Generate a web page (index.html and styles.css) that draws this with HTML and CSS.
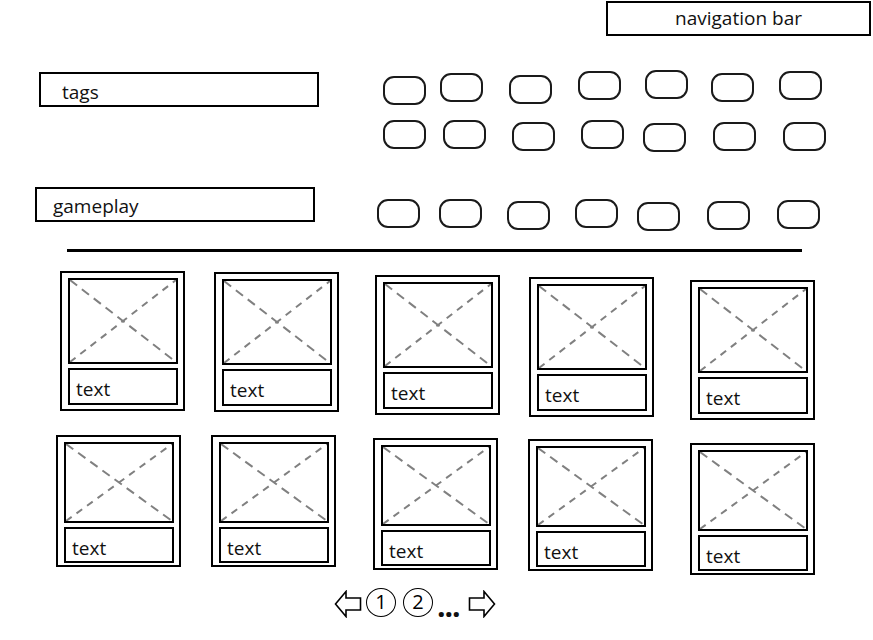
FILE: index.html
```html
<!DOCTYPE html>
<html lang="en">
<head>
  <meta charset="UTF-8">
  <meta name="viewport" content="width=device-width, initial-scale=1.0">
  <title>Games - wireframe</title>
  <link rel="stylesheet" href="styles.css">
</head>
<body>
  <header class="header">
    <div class="nav-box">navigation bar</div>
  </header>

  <section class="filters">
    <div class="filter-row filter-tags">
      <div class="label-box">tags</div>
      <div class="pill-grid">
        <span class="pill"></span><span class="pill"></span><span class="pill"></span><span class="pill"></span><span class="pill"></span><span class="pill"></span><span class="pill"></span>
        <span class="pill"></span><span class="pill"></span><span class="pill"></span><span class="pill"></span><span class="pill"></span><span class="pill"></span><span class="pill"></span>
      </div>
    </div>
    <div class="filter-row filter-gameplay">
      <div class="label-box">gameplay</div>
      <div class="pill-grid">
        <span class="pill"></span><span class="pill"></span><span class="pill"></span><span class="pill"></span><span class="pill"></span><span class="pill"></span><span class="pill"></span>
      </div>
    </div>
  </section>

  <div class="divider"></div>

  <main class="cards">
    <div class="card-row row-1">
      <div class="card"><div class="thumb"><svg viewBox="0 0 100 100" preserveAspectRatio="none"><line class="d1" x1="0" y1="0" x2="100" y2="100"/><line class="d2" x1="0" y1="100" x2="100" y2="0"/></svg></div><div class="caption">text</div></div>
      <div class="card"><div class="thumb"><svg viewBox="0 0 100 100" preserveAspectRatio="none"><line class="d1" x1="0" y1="0" x2="100" y2="100"/><line class="d2" x1="0" y1="100" x2="100" y2="0"/></svg></div><div class="caption">text</div></div>
      <div class="card"><div class="thumb"><svg viewBox="0 0 100 100" preserveAspectRatio="none"><line class="d1" x1="0" y1="0" x2="100" y2="100"/><line class="d2" x1="0" y1="100" x2="100" y2="0"/></svg></div><div class="caption">text</div></div>
      <div class="card"><div class="thumb"><svg viewBox="0 0 100 100" preserveAspectRatio="none"><line class="d1" x1="0" y1="0" x2="100" y2="100"/><line class="d2" x1="0" y1="100" x2="100" y2="0"/></svg></div><div class="caption">text</div></div>
      <div class="card"><div class="thumb"><svg viewBox="0 0 100 100" preserveAspectRatio="none"><line class="d1" x1="0" y1="0" x2="100" y2="100"/><line class="d2" x1="0" y1="100" x2="100" y2="0"/></svg></div><div class="caption">text</div></div>
    </div>
    <div class="card-row row-2">
      <div class="card"><div class="thumb"><svg viewBox="0 0 100 100" preserveAspectRatio="none"><line class="d1" x1="0" y1="0" x2="100" y2="100"/><line class="d2" x1="0" y1="100" x2="100" y2="0"/></svg></div><div class="caption">text</div></div>
      <div class="card"><div class="thumb"><svg viewBox="0 0 100 100" preserveAspectRatio="none"><line class="d1" x1="0" y1="0" x2="100" y2="100"/><line class="d2" x1="0" y1="100" x2="100" y2="0"/></svg></div><div class="caption">text</div></div>
      <div class="card"><div class="thumb"><svg viewBox="0 0 100 100" preserveAspectRatio="none"><line class="d1" x1="0" y1="0" x2="100" y2="100"/><line class="d2" x1="0" y1="100" x2="100" y2="0"/></svg></div><div class="caption">text</div></div>
      <div class="card"><div class="thumb"><svg viewBox="0 0 100 100" preserveAspectRatio="none"><line class="d1" x1="0" y1="0" x2="100" y2="100"/><line class="d2" x1="0" y1="100" x2="100" y2="0"/></svg></div><div class="caption">text</div></div>
      <div class="card"><div class="thumb"><svg viewBox="0 0 100 100" preserveAspectRatio="none"><line class="d1" x1="0" y1="0" x2="100" y2="100"/><line class="d2" x1="0" y1="100" x2="100" y2="0"/></svg></div><div class="caption">text</div></div>
    </div>
  </main>

  <nav class="pager">
    <svg class="arrow" viewBox="0 0 28 28"><path d="M1.5 14 L12 1.5 L12 8 L26.5 8 L26.5 20 L12 20 L12 26.5 Z"/></svg>
    <span class="page-num">1</span>
    <span class="page-num">2</span>
    <span class="dots">...</span>
    <svg class="arrow" viewBox="0 0 28 28"><path d="M26.5 14 L16 1.5 L16 8 L1.5 8 L1.5 20 L16 20 L16 26.5 Z"/></svg>
  </nav>
</body>
</html>
```

FILE: styles.css
```css
* {
  margin: 0;
  padding: 0;
  box-sizing: border-box;
}

body {
  font-family: 'Open Sans', sans-serif;
  color: #111;
  background: #fff;
  width: 873px;
  height: 640px;
  overflow: hidden;
}

/* Header */
.header {
  display: flex;
  justify-content: flex-end;
  padding: 1px 2px 0 0;
}

.nav-box {
  width: 265px;
  height: 35px;
  border: 2px solid #000;
  font-size: 19px;
  line-height: 30px;
  text-align: center;
}

/* Filters */
.filter-row {
  display: flex;
  align-items: flex-start;
}

.filter-tags {
  margin-top: 36px;
}

.filter-gameplay {
  margin-top: 37px;
}

.label-box {
  width: 280px;
  height: 35px;
  border: 2px solid #000;
  font-size: 19px;
  line-height: 30px;
}

.filter-tags .label-box {
  margin-left: 39px;
  padding: 3px 0 0 21px;
}

.filter-gameplay .label-box {
  margin-left: 35px;
  padding: 2px 0 0 16px;
}

.pill-grid {
  display: grid;
  grid-template-columns: repeat(7, 43px);
  grid-auto-rows: 29px;
  column-gap: 23px;
  row-gap: 19px;
}

.filter-tags .pill-grid {
  margin-left: 64px;
  margin-top: 1px;
}

.filter-gameplay .pill-grid {
  margin-left: 62px;
  margin-top: 13px;
}

.pill {
  display: block;
  width: 43px;
  height: 29px;
  border: 2px solid #1a1a1a;
  border-radius: 11px;
}

/* hand-drawn wobble of the sketch */
.filter-tags .pill:nth-child(1) { margin-top: 3px; }
.filter-tags .pill:nth-child(2) { margin-left: -9px; }
.filter-tags .pill:nth-child(3) { margin: 2px 0 0 -6px; }
.filter-tags .pill:nth-child(4) { margin: -2px 0 0 -3px; }
.filter-tags .pill:nth-child(5) { margin: -3px 0 0 -2px; }
.filter-tags .pill:nth-child(6) { margin-left: -2px; }
.filter-tags .pill:nth-child(7) { margin-top: -2px; }
.filter-tags .pill:nth-child(8) { margin-top: -1px; }
.filter-tags .pill:nth-child(9) { margin: -1px 0 0 -6px; }
.filter-tags .pill:nth-child(10) { margin: 1px 0 0 -3px; }
.filter-tags .pill:nth-child(11) { margin-top: -1px; }
.filter-tags .pill:nth-child(12) { margin: 2px 0 0 -4px; }
.filter-tags .pill:nth-child(13) { margin-top: 1px; }
.filter-tags .pill:nth-child(14) { margin: 1px 0 0 4px; }
.filter-gameplay .pill:nth-child(1) { margin-top: -1px; }
.filter-gameplay .pill:nth-child(2) { margin: -1px 0 0 -4px; }
.filter-gameplay .pill:nth-child(3) { margin: 1px 0 0 -2px; }
.filter-gameplay .pill:nth-child(4) { margin-top: -1px; }
.filter-gameplay .pill:nth-child(5) { margin: 2px 0 0 -4px; }
.filter-gameplay .pill:nth-child(6) { margin-top: 1px; }
.filter-gameplay .pill:nth-child(7) { margin-left: 4px; }

/* Divider */
.divider {
  margin: 20px 0 0 67px;
  width: 735px;
  height: 3px;
  background: #000;
}

/* Cards */
.card-row {
  display: flex;
  align-items: flex-start;
}

.row-1 {
  margin-top: 19px;
  padding-left: 60px;
  gap: 29px;
}

.row-2 {
  margin-top: 15px;
  padding-left: 56px;
  gap: 30px;
}

.card {
  width: 125px;
  border: 2px solid #000;
  padding: 5px 5px 4px 6px;
  display: flex;
  flex-direction: column;
  gap: 4px;
}

.card:nth-child(3),
.card:nth-child(5) {
  margin-left: 7px;
}

.row-2 .card {
  padding-bottom: 2px;
}

.row-1 .card:nth-child(2) { margin-top: 1px; }
.row-1 .card:nth-child(3) { margin-top: 4px; }
.row-1 .card:nth-child(4) { margin-top: 6px; }
.row-1 .card:nth-child(5) { margin-top: 9px; }
.row-2 .card:nth-child(3) { margin-top: 3px; }
.row-2 .card:nth-child(4) { margin-top: 4px; }
.row-2 .card:nth-child(5) { margin-top: 8px; }

.thumb {
  height: 86px;
  border: 2px solid #000;
}

.row-2 .thumb {
  height: 81px;
}

.thumb svg {
  display: block;
  width: 100%;
  height: 100%;
}

.thumb line {
  stroke: #808080;
  stroke-width: 2;
  vector-effect: non-scaling-stroke;
}

.thumb .d1 {
  stroke-dasharray: 9 6;
}

.thumb .d2 {
  stroke-dasharray: 7 6;
}

.caption {
  height: 37px;
  border: 2px solid #000;
  padding: 5px 0 0 6px;
  font-size: 19px;
  line-height: 29px;
}

.row-2 .caption {
  height: 36px;
}

/* Pagination */
.pager {
  display: flex;
  align-items: flex-end;
  margin: 13px 0 0 334px;
}

.arrow {
  width: 28px;
  height: 28px;
}

.arrow path {
  fill: none;
  stroke: #000;
  stroke-width: 1.6;
  stroke-linejoin: miter;
}

.pager .arrow:first-child {
  margin-right: 4px;
}

.page-num {
  width: 30px;
  height: 29px;
  margin-bottom: 1px;
  border: 1.5px solid #000;
  border-radius: 50%;
  color: #000;
  font-size: 20px;
  line-height: 26px;
  text-align: center;
}

.page-num + .page-num {
  margin-left: 7px;
}

.dots {
  margin: 0 8px 0 4px;
  font-size: 30px;
  font-weight: 700;
  line-height: 24px;
  letter-spacing: -1px;
}
```
